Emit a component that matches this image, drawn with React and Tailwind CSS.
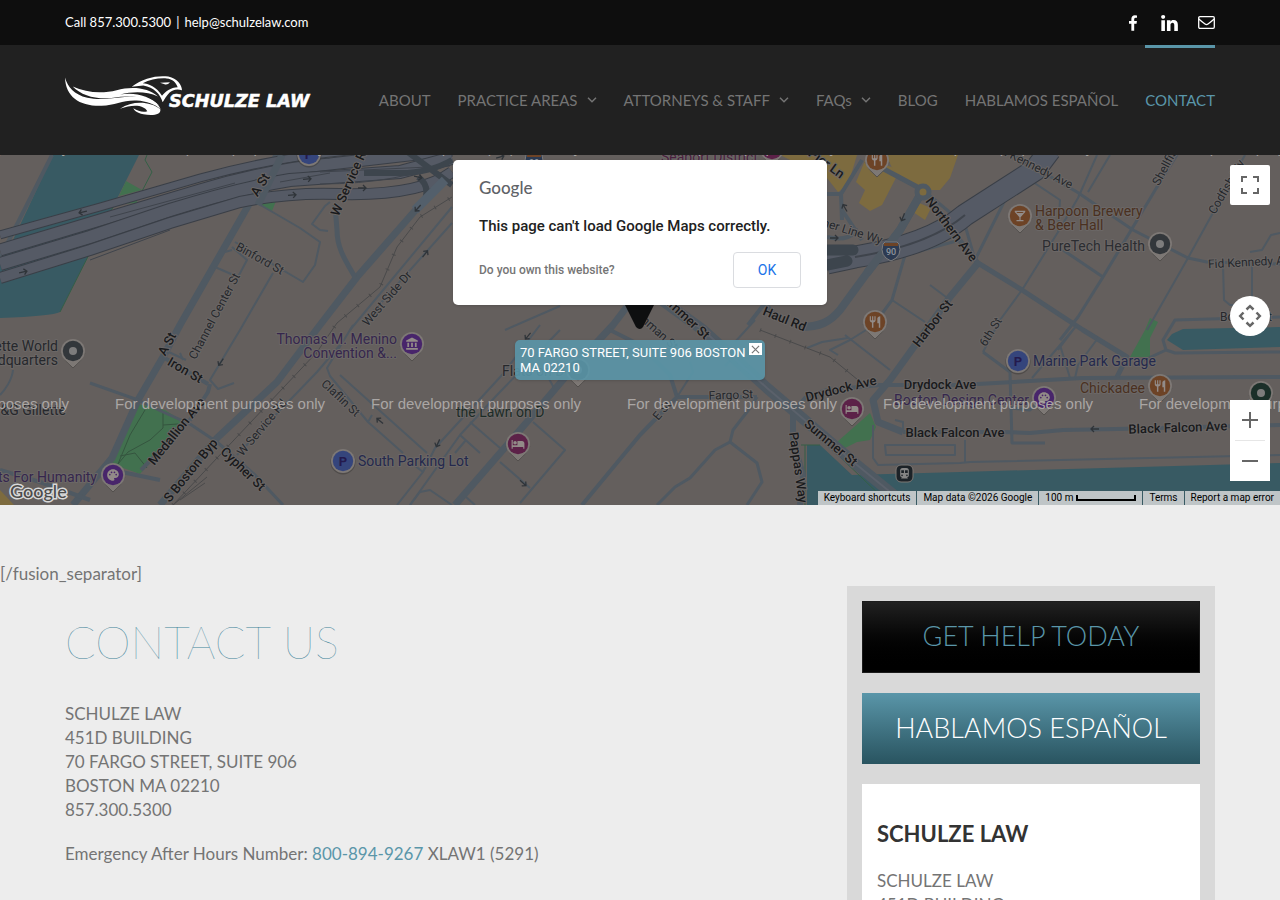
import React from "react";
import { MdRestaurant, MdHotel, MdLocalBar, MdPalette, MdAccountBalance, MdDirectionsTransit } from "react-icons/md";

const NAV = [
  { label: "ABOUT" },
  { label: "PRACTICE AREAS", menu: true },
  { label: "ATTORNEYS & STAFF", menu: true },
  { label: "FAQs", menu: true },
  { label: "BLOG" },
  { label: "HABLAMOS ESPAÑOL" },
  { label: "CONTACT", active: true },
];

// Local streets: [stroke width, path]
const STREETS = [
  [7, "M280 150 L180 325 L163 357 L138 400 L112 458 L73 505"],
  [2, "M235 242 L303 282 L315 265 L320 242 L300 228 L257 203"],
  [2, "M273 273 L240 330 L210 380 L218 389 L234 383"],
  [2, "M215 267 L238 277 L247 260 L232 247 M225 252 L232 250"],
  [2, "M330 202 L325 206 L312 224 L320 230 L328 231"],
  [3, "M90 383 L138 400 L163 412 L190 424 L217 442 M217 442 L255 475 L283 505"],
  [4, "M210 384 L208 392 L190 420 M141 470 L190 420 M163 357 L208 384"],
  [2, "M160 348 L186 360 M180 353 L183 360 M237 455 L317 372 L340 345"],
  [7, "M160 505 L217 438 L277 382 L320 325 L357 277 L413 213 L445 178"],
  [5, "M355 277 C345 260 337 248 337 230 L335 205"],
  [2, "M350 330 L452 207 M363 323 L452 223"],
  [2, "M353 325 L327 368 L330 376 L368 422 L403 453 M340 375 L427 453 M368 422 L372 415"],
  [2, "M540 325 L502 375 L435 448 L423 472 L397 505 M423 472 L410 462"],
  [2, "M560 330 L497 395 L460 435 L410 505 M460 435 L480 453 M455 453 L466 440 M470 422 L500 448"],
  [2, "M410 505 L420 492 L430 490 L452 505 M466 497 L475 505 M505 330 L560 306"],
  [7, "M455 505 L533 415 L573 368 L613 325 L632 300"],
  [2, "M533 422 L565 450 L520 503 M500 462 L530 488 M536 355 L554 388"],
  [4, "M582 505 L640 435 L677 397 L757 397 M677 397 L670 375 L640 345 L610 330"],
  [2, "M677 397 L693 372 L690 362 M740 350 L725 366 M735 342 L755 320"],
  [3, "M757 397 L750 408 L733 430 L730 442 L715 450 L690 478 L675 487 L657 505 M730 442 L757 463 L762 482 L747 505"],
  [11, "M655 295 L703 330 L767 388 L807 422 L857 465 L900 500"],
  [6, "M793 412 L793 440 L803 475 L800 505"],
  [4, "M793 412 L805 398 L827 390 L880 385 L960 385 L1083 378 L1280 377"],
  [7, "M978 263 L950 297 L890 380 L873 400 L878 422 L903 432"],
  [4, "M903 432 L1003 432 L1030 433 L1063 430 L1117 429 L1280 425"],
  [2, "M873 425 L873 458 L878 465 L960 463 L970 462 L1280 455"],
  [2, "M885 445 L955 445 L955 455 L886 455 Z M965 440 L965 463 M895 420 L903 422 L903 432"],
  [3, "M983 352 L1010 372 L1012 443 L1045 443 M1012 408 L1030 410 L1038 402"],
  [2, "M983 352 L1000 320 L1022 290 L1058 232 L1060 200 L1030 180 M1058 232 L1078 198 L1097 155 M1088 192 L1110 155"],
  [5, "M880 167 L923 190 L950 228 L978 263 L1022 290 L1083 330 L1127 357 L1117 377"],
  [8, "M923 190 L900 230 L867 273 L840 310 C830 322 820 327 800 327"],
  [3, "M923 190 L965 225 L975 260 L1018 174 M960 240 L905 255 L892 300 L870 330"],
  [2, "M892 300 L925 322 M930 285 L950 300 M874 325 L850 340 L830 350 L838 355"],
  [3, "M1177 155 L1157 187 L1103 277 L1078 317 L1060 340 M1063 250 L1103 277"],
  [2, "M1245 155 L1188 258 L1147 330"],
  [3, "M1013 155 L1077 192 L1133 230 L1188 258 L1207 262 L1280 264"],
  [2, "M1223 265 L1224 300 L1230 305 L1252 305 L1252 265 M1250 252 L1262 250 L1271 235 L1280 233"],
  [3, "M1280 317 L1175 320 L1163 340 L1166 350 L1175 353 L1280 352 M1166 350 L1140 362"],
  [2, "M1077 325 L1032 378 M1098 338 L1078 365 L1075 378 M1060 345 L1070 378 M1058 350 L1077 325"],
  [4, "M827 194 L841 194 L862 160 M841 194 L842 220 M780 320 L762 300 M748 325 L765 303"],
  [4, "M0 470 L40 482 L90 500 M112 470 L160 480 M827 237 C845 241 855 236 856 228 M842 210 L862 240"],
  [2, "M13 370 C12 380 5 390 0 395 M807 348 L822 342 L848 338 M845 335 L890 370"],
];

// Street names along their street: [text, x, y, angle]
const MAJOR_LABELS = [
  ["A St", 264, 187, -58],
  ["A St", 171, 346, -62],
  ["Iron St", 183, 374, 30],
  ["Medallion Ave", 180, 434, -51],
  ["S Boston Byp", 194, 473, -51],
  ["Cypher St", 240, 472, 44],
  ["W Service Rd", 354, 182, -66],
  ["Summer St", 681, 318, 43],
  ["Haul Rd", 783, 323, 22],
  ["Pier Ln", 824, 167, 36],
  ["Northern Ave", 948, 232, 53],
  ["Harbor St", 936, 326, -52],
  ["Drydock Ave", 842, 393, -14],
  ["Drydock Ave", 940, 389, 0],
  ["Black Falcon Ave", 955, 437, 0],
  ["Black Falcon Ave", 1178, 432, -2],
  ["Summer St", 828, 446, 40],
  ["Pappas Way", 794, 468, 82],
];

const MINOR_LABELS = [
  ["Binford St", 258, 262, 29],
  ["Channel Center St", 218, 318, -62],
  ["W Service Rd", 265, 430, -50],
  ["West Side Dr", 390, 301, -49],
  ["Claflin St", 338, 401, 43],
  ["Inman St", 656, 335, 42],
  ["E St", 665, 413, -50],
  ["Fargo St", 731, 399, -2],
  ["Steamer Line Wy", 838, 231, 17],
  ["6th St", 994, 334, -58],
  ["Fid Kennedy Ave", 1031, 169, 27],
  ["Fid Kennedy Ave", 1252, 266, -3],
  ["Shellfish St", 1173, 160, -62],
  ["Codfish Wy", 1230, 189, -60],
  ["Bolster St", 1246, 321, 0],
];

// Place names: [text, x, baseline, anchor, colour]
const PLACES = [
  ["Gillette World", 58, 351, "end", "#26282c"],
  ["Headquarters", 58, 365, "end", "#26282c"],
  ["P&G Gillette", 66, 415, "end", "#26282c"],
  ["Arts For Humanity", 97, 482, "end", "#35264d"],
  ["Thomas M. Menino", 397, 344, "end", "#35264d"],
  ["Convention &...", 397, 358, "end", "#35264d"],
  ["South Parking Lot", 358, 466, "start", "#24294d"],
  ["Flats on D", 502, 376, "start", "#26282c"],
  ["the Lawn on D", 456, 417, "start", "#1d2c26"],
  ["Seaport District", 661, 162, "start", "#4a1f3f"],
  ["Harpoon Brewery", 1035, 216, "start", "#4a3020"],
  ["& Beer Hall", 1035, 230, "start", "#4a3020"],
  ["PureTech Health", 1145, 251, "end", "#2b2d31"],
  ["Marine Park Garage", 1033, 366, "start", "#24294d"],
  ["Chickadee", 1145, 393, "end", "#4a3020"],
  ["Boston Design Center", 894, 405, "start", "#35264d"],
];

const PINS = [
  [73, 351, "#33373b", "dot"],
  [113, 475, "#48256b", MdPalette],
  [412, 344, "#48256b", MdAccountBalance],
  [343, 461, "#35457c", "P"],
  [309, 154, "#35457c", "P"],
  [518, 444, "#5c2148", MdHotel],
  [578, 370, "#33373b", "dot"],
  [772, 149, "#5c2148", MdHotel],
  [877, 160, "#6d4326", MdRestaurant],
  [875, 322, "#6d4326", MdRestaurant],
  [852, 409, "#5c2148", MdHotel],
  [1020, 216, "#6d4326", MdLocalBar],
  [1160, 244, "#33373b", "dot"],
  [1018, 361, "#35457c", "P"],
  [1044, 398, "#48256b", MdPalette],
  [1160, 386, "#6d4326", MdRestaurant],
  [1261, 393, "#1b2f29", "dot"],
];

const ARROWS = [
  [83, 212, 168], [23, 272, -12], [307, 179, -4], [292, 195, -4], [418, 177, 12], [362, 188, 0],
  [418, 208, 132], [425, 254, -52], [221, 362, 125], [380, 421, 220], [438, 443, 115], [528, 336, 130],
  [523, 483, 42], [845, 208, 240], [903, 217, 112], [834, 238, 0], [1095, 429, 180], [500, 157, -15],
];

function Pin({ x, y, color, kind }) {
  const Icon = kind;
  return (
    <g>
      {kind === "P" ? (
        <circle cx={x} cy={y + 1} r="12.5" fill="#3a3836" opacity=".5" />
      ) : (
        <path d={`M${x - 12} ${y + 2} Q${x - 9} ${y + 10} ${x} ${y + 17} Q${x + 9} ${y + 10} ${x + 12} ${y + 2}Z`} fill="#7d7875" stroke="#4a4745" strokeWidth=".8" />
      )}
      <circle cx={x} cy={y} r="12" fill="#7d7875" />
      <circle cx={x} cy={y} r="10.2" fill={color} />
      {kind === "dot" && <circle cx={x} cy={y} r="4" fill="#7d7c7c" />}
      {kind === "P" && (
        <text x={x} y={y + 5} textAnchor="middle" fontSize="13" fontWeight="700" fill="#241a4d">P</text>
      )}
      {typeof kind !== "string" && <Icon x={x - 7} y={y - 7} size={14} color="#928b88" />}
    </g>
  );
}

function Shield({ x, y }) {
  return (
    <g>
      <path d={`M${x - 8} ${y - 7} L${x - 6} ${y - 9} H${x + 6} L${x + 8} ${y - 7} Q${x + 12} ${y + 5} ${x} ${y + 10} Q${x - 12} ${y + 5} ${x - 8} ${y - 7}Z`} fill="#2c3a52" stroke="#7d7c7c" />
      <path d={`M${x - 7} ${y - 8} H${x + 7} V${y - 5} H${x - 7}Z`} fill="#6d4326" />
      <text x={x} y={y + 4} textAnchor="middle" fontSize="9" fontWeight="500" fill="#90959c">90</text>
    </g>
  );
}

function CityMap() {
  const lanes = [
    [7, "M0 235 L100 207 L200 178 Q270 159 330 153 L452 140"],
    [11, "M0 250 L60 232 L130 211 L200 190 Q270 169 330 164 L452 150"],
    [12, "M0 264 L90 237 L170 210 Q240 188 290 180 L400 172 L452 158"],
    [10, "M0 278 L90 250 L170 223 L240 202 Q290 192 340 194 Q420 196 452 172"],
  ];
  return (
    <svg viewBox="0 155 1280 350" preserveAspectRatio="xMidYMid slice" className="block h-full w-full" fontFamily="Roboto, sans-serif" aria-label="Map of Boston around 70 Fargo Street" role="img">
      <rect x="0" y="155" width="1280" height="350" fill="#645f5d" />
      <path d="M53 155 H139 L60 312 Q52 316 0 318 V262 L13 240Z" fill="#385a63" />
      <path d="M807 445 H820 L852 475 L960 472 L1280 463 V505 H807Z" fill="#385a63" />
      <path d="M1167 340 L1172 334 L1183 329 L1280 327 V347 L1183 350Z" fill="#385a63" />
      <g fill="#42714f">
        <path d="M126 181 L142 190 L119 196Z M119 204 L137 198 V203Z M258 203 L276 201 L272 211Z" />
        <path d="M138 404 L165 410 L184 422 L140 474 L112 464Z" />
        <path d="M837 442 L870 413 L876 427 L870 440 L857 442 L845 448Z" />
        <path d="M1150 318 L1158 322 L1150 338 V357 H1130 L1145 330Z" />
      </g>
      <g fill="#7d6b3f">
        <path d="M780 155 H857 L848 185 L838 192 L827 178Z M866 158 L900 170 L882 205 L870 211 L859 203 L865 190 L856 182Z" />
        <path d="M886 155 H958 L950 178 L940 190 H920 L893 170Z M912 200 L931 208 L925 220 L913 212Z M0 490 L14 505 H0Z" />
      </g>
      <path d="M147 155 L145 160 L152 172 L140 195 L113 207 L60 312 M793 412 L885 500 M801 445 H820 M805 445 V505" stroke="#345f46" fill="none" />
      <path d="M145 410 L130 435 L118 464 M163 412 V428 L150 440 L128 452 L118 464 M163 425 L178 424 M120 456 L135 453 L147 468" stroke="#35553f" fill="none" />

      <g fill="none" strokeLinejoin="round">
        {STREETS.map(([w, d]) => (
          <path key={d} d={d} stroke="#4f5962" strokeWidth={w} />
        ))}
        <path d="M657 295 L703 330 L767 388 L807 422 L857 465 L900 500" stroke="#5b616b" strokeWidth="2" />
        <path d="M52 155 L0 258" stroke="#4f5962" strokeWidth="4" />
        {lanes.map(([w, d]) => (
          <g key={d}>
            <path d={d} stroke="#3a3f47" strokeWidth={w + 2} />
            <path d={d} stroke="#555a65" strokeWidth={w} />
          </g>
        ))}
        <path d="M110 217 L235 183 M90 260 L170 230 M280 182 L330 173 M320 172 L450 166 M320 184 Q400 184 452 160" stroke="#3f444c" />
        <path d="M364 173 H400 Q430 173 452 160 M418 177 Q430 185 425 200 M405 150 L452 185" stroke="#3d454d" strokeWidth="6" />
        <path d="M445 180 L415 210" stroke="#535f6b" strokeWidth="9" />
        <path d="M258 205 L282 155" stroke="#4f5962" strokeWidth="7" />
        <path d="M827 263 L855 257 Q930 245 965 215 L1035 170 L1050 150" stroke="#3a3f47" strokeWidth="23" />
        <path d="M827 263 L855 257 Q930 245 965 215 L1035 170 L1050 150" stroke="#555a65" strokeWidth="21" />
        <path d="M855 257 Q930 245 965 215" stroke="#3f444c" strokeWidth="2" />
        <path d="M827 250 H853 M827 265 L847 261" stroke="#3d454d" strokeWidth="11" strokeLinecap="round" />
        <path d="M923 190 L900 230 L867 273" stroke="#4f5962" strokeWidth="8" />
        <circle cx="923" cy="192" r="6" stroke="#4f5962" strokeWidth="5" fill="#7d6b3f" />
        <path d="M173 505 L217 458 L317 352 L337 323 L380 287 L397 247 L420 217 L452 197 M173 505 L207 477 M180 500 L205 483 M760 330 L830 357 L858 380" stroke="#4a4a4b" />
        <path d="M173 505 L217 458 L317 352 L337 323 L380 287 L397 247 L420 217 L452 197 M760 330 L830 357 L858 380" stroke="#4a4a4b" strokeWidth="4" strokeDasharray="1 15" />
      </g>

      <g stroke="#2f3439" fill="none" strokeWidth="1.3">
        {ARROWS.map(([x, y, a]) => (
          <path key={`${x}-${y}`} d="M-4 0 H4 M1 -3 L4 0 L1 3" transform={`translate(${x} ${y}) rotate(${a})`} />
        ))}
      </g>

      {PINS.map(([x, y, c, k]) => (
        <Pin key={`${x}-${y}`} x={x} y={y} color={c} kind={k} />
      ))}
      <rect x="896" y="465" width="17" height="17" rx="5" fill="#1c2227" stroke="#7d7875" />
      <MdDirectionsTransit x={898} y={467} size={13} color="#858585" />
      <Shield x={891} y={251} />
      <Shield x={534} y={162} />

      <g stroke="#6b6766" strokeWidth="2" paintOrder="stroke" strokeLinejoin="round">
        {MAJOR_LABELS.map(([t, x, y, a]) => (
          <text key={`${x}-${y}`} transform={`translate(${x} ${y}) rotate(${a})`} textAnchor="middle" fontSize="13" fontWeight="500" fill="#191a1c">{t}</text>
        ))}
        {MINOR_LABELS.map(([t, x, y, a]) => (
          <text key={`${x}-${y}`} transform={`translate(${x} ${y}) rotate(${a})`} textAnchor="middle" fontSize="12" fill="#25282c">{t}</text>
        ))}
        {PLACES.map(([t, x, y, anchor, c]) => (
          <text key={t} x={x} y={y} textAnchor={anchor} fontSize="14" fill={c}>{t}</text>
        ))}
      </g>
      <path d="M624 303 H655 L643 327 Q640 331 636 327Z" fill="#0e0f10" />

      <g fill="#aaa6a4" fontSize="15" fontFamily="'Liberation Sans', Arial, sans-serif">
        {[-141, 115, 371, 627, 883, 1139].map((x) => (
          <g key={x}>
            <text x={x} y="153">For development purposes only</text>
            <text x={x} y="409">For development purposes only</text>
          </g>
        ))}
      </g>
      <text x="10" y="498" fontSize="18" fontWeight="500" fontFamily="Lato, sans-serif" fill="#4b4b4b" stroke="#d8d8d8" strokeWidth="3" paintOrder="stroke">Google</text>
    </svg>
  );
}

function Logo() {
  return (
    <svg viewBox="195 226 756 122" className="h-[41px] w-[252px]" role="img" aria-label="Schulze Law">
      <g fill="#fff">
        <path d="M195 233 C197 292 240 320 305 318 C345 316 370 300 410 302 C440 304 465 313 482 328 C472 300 432 288 390 290 C345 293 305 303 262 294 C222 284 203 262 195 233Z" />
        <path d="M218 260 C260 280 310 281 350 271 C395 259 445 263 474 290 C440 274 400 274 360 284 C400 276 450 286 478 318 C440 290 390 286 340 294 C290 300 245 288 218 260Z" />
        <path d="M360 327 C400 300 452 306 481 328 C484 346 455 348 430 343 C410 339 402 331 400 325 C415 334 428 338 442 334 C432 316 400 312 360 327Z" />
        <path fillRule="evenodd" d="M395 261 C430 234 470 226 505 230 C532 236 545 254 546 271 C530 266 517 270 508 279 C500 288 494 297 488 307 C482 285 462 262 430 257 Z M428 250 C445 251 470 260 486 288 C496 274 512 263 533 262 C528 248 518 238 500 236 C475 234 450 240 428 250Z" />
        <path d="M480 249 L510 247 Q504 255 496 254Z" />
        <text x="507" y="321" fontFamily="'DejaVu Sans', sans-serif" fontWeight="700" fontStyle="italic" fontSize="53" stroke="#fff" strokeWidth="1.5">SCHULZE LAW</text>
      </g>
    </svg>
  );
}

function Chevron() {
  return (
    <svg viewBox="0 0 10 6" className="ml-[9px] h-[6px] w-[10px]" fill="none" stroke="currentColor" strokeWidth="1.5" aria-hidden="true">
      <path d="M1 .8 L5 4.8 L9 .8" />
    </svg>
  );
}

function FacebookIcon() {
  return (
    <svg viewBox="95 0 864 1664" className="h-[16px] w-[8px]" fill="currentColor" aria-hidden="true">
      <path d="M959 12v264H802q-86 0-116 36t-30 108v189h293l-39 296H656v759H350V905H95V609h255V391q0-186 104-288.500T731 0q147 0 228 12z" />
    </svg>
  );
}

function LinkedInIcon() {
  return (
    <svg viewBox="0 148 1536 1468" className="h-[16px] w-[17px]" fill="currentColor" aria-hidden="true">
      <path d="M349 625v991H19V625h330zm21-306q1 73-50.500 122T184 490h-2q-82 0-132-49T0 319q0-74 51.500-122.500T186 148t133 48.500T370 319zm1166 729v568h-329v-530q0-105-40.500-164.500T1040 862q-63 0-105.500 34.500T871 982q-11 30-11 81v553H531q2-399 2-647t-1-296l-1-48h329v144h-2q20-32 41-56t56.500-52 87-43.500T1157 602q171 0 275 113.500t104 332.500z" />
    </svg>
  );
}

function EnvelopeIcon() {
  return (
    <svg viewBox="0 0 17 13" className="h-[13px] w-[17px]" fill="none" stroke="currentColor" strokeWidth="1.3" aria-hidden="true">
      <rect x=".7" y=".7" width="15.6" height="11.6" rx="1.2" />
      <path d="M.8 3 C3 5 5 6.500 7 8 Q8.500 9.200 10 8 C12 6.500 14 5 16.200 3" />
    </svg>
  );
}

function Header() {
  return (
    <header>
      <div className="bg-[#0e0e0e] text-white">
        <div className="mx-auto flex h-[45px] max-w-[1150px] items-center justify-between">
          <p className="flex gap-[5px] pb-[2px] text-[13px] leading-[20px]">
            <span>Call 857.300.5300</span>
            <span>|</span>
            <a href="mailto:help@schulzelaw.com">help@schulzelaw.com</a>
          </p>
          <div className="flex items-center gap-[20px]">
            <a href="#facebook" aria-label="Facebook" className="pr-1"><FacebookIcon /></a>
            <a href="#linkedin" aria-label="LinkedIn"><LinkedInIcon /></a>
            <a href="#email" aria-label="Email"><EnvelopeIcon /></a>
          </div>
        </div>
      </div>
      <div className="bg-[#212121]">
        <div className="mx-auto flex h-[110px] max-w-[1150px] justify-between">
          <a href="#home" className="mt-[30px] shrink-0 self-start"><Logo /></a>
          <nav className="flex gap-[27px] text-[15px] text-[#747474]">
            {NAV.map((n) => (
              <a
                key={n.label}
                href="#nav"
                className={n.active ? "flex items-center border-t-3 border-[#5a96a9] pb-[3px] whitespace-nowrap text-[#5a96a9]" : "flex items-center border-t-3 border-transparent pb-[3px] whitespace-nowrap"}
              >
                {n.label}
                {n.menu && <Chevron />}
              </a>
            ))}
          </nav>
        </div>
      </div>
    </header>
  );
}

function MapSection() {
  return (
    <section className="relative h-[350px] overflow-hidden font-[Roboto,sans-serif]">
      <CityMap />

      <div className="absolute top-[185px] left-1/2 flex w-[250px] -translate-x-1/2 items-start justify-between rounded-[5px] bg-[#5a96a9]/90 p-[5px] text-[13px] leading-[15px] text-white shadow">
        <p>70 FARGO STREET, SUITE 906 BOSTON MA 02210</p>
        <button type="button" aria-label="Close" className="-mt-[2px] -mr-[2px] flex h-[12px] w-[13px] shrink-0 items-center justify-center bg-white text-[#777]">
          <svg viewBox="0 0 10 10" className="h-[9px] w-[9px]" stroke="currentColor" strokeWidth="1.3"><path d="M1 1 L9 9 M9 1 L1 9" /></svg>
        </button>
      </div>

      <div role="dialog" aria-label="Google Maps" className="absolute top-[5px] left-1/2 h-[145px] w-[374px] -translate-x-1/2 rounded-[5px] bg-white px-[26px] pt-[15px] shadow">
        <div className="font-[Lato,sans-serif] text-[17px] leading-[26px] font-medium text-[#5f6368]">Google</div>
        <p className="mt-[16px] text-[15px] leading-[18px] font-medium text-[#212121]">This page can't load Google Maps correctly.</p>
        <div className="mt-[17px] flex items-center justify-between">
          <a href="#owner" className="text-[12px] font-medium text-[#757575]">Do you own this website?</a>
          <button type="button" className="h-[36px] w-[68px] rounded-[4px] border border-[#dadce0] text-[14px] text-[#1a73e8]">OK</button>
        </div>
      </div>

      <button type="button" aria-label="Toggle fullscreen" className="absolute top-[10px] right-[10px] flex h-[40px] w-[40px] items-center justify-center rounded-[2px] bg-white">
        <svg viewBox="0 0 18 18" className="h-[18px] w-[18px]" fill="#666"><path d="M0 0v6h2V2h4V0H0zm16 0h-4v2h4v4h2V0h-2zm0 16h-4v2h6v-6h-2v4zM2 12H0v6h6v-2H2v-4z" /></svg>
      </button>
      <button type="button" aria-label="Map camera controls" className="absolute top-[141px] right-[10px] flex h-[40px] w-[40px] items-center justify-center rounded-full bg-white">
        <svg viewBox="0 0 24 24" className="h-[24px] w-[24px]" fill="none" stroke="#666" strokeWidth="2.500"><path d="M8.500 5.500 L12 2.200 L15.500 5.500 M8.500 18.500 L12 21.800 L15.500 18.500 M5.500 8.500 L2.200 12 L5.500 15.500 M18.500 8.500 L21.800 12 L18.500 15.500" /></svg>
      </button>
      <div className="absolute top-[245px] right-[10px] flex w-[40px] flex-col items-center bg-white">
        <button type="button" aria-label="Zoom in" className="flex h-[40px] w-full items-center justify-center">
          <svg viewBox="0 0 16 16" className="h-[16px] w-[16px]" fill="#666"><path d="M7 0h2v7h7v2H9v7H7V9H0V7h7z" /></svg>
        </button>
        <div className="h-px w-[30px] bg-[#e6e6e6]" />
        <button type="button" aria-label="Zoom out" className="flex h-[40px] w-full items-center justify-center">
          <svg viewBox="0 0 16 16" className="h-[16px] w-[16px]" fill="#666"><path d="M0 7h16v2H0z" /></svg>
        </button>
      </div>

      <div className="absolute right-0 bottom-0 flex gap-px text-[10px] leading-[14px] text-black">
        <button type="button" className="bg-[#bfc5c7] px-[6px]">Keyboard shortcuts</button>
        <span className="bg-[#bfc5c7] px-[6px]">Map data ©2026 Google</span>
        <span className="flex bg-[#bfc5c7] px-[6px]">
          100 m
          <span className="mt-[4px] ml-[3px] h-[6px] w-[60px] border-x-2 border-b-2 border-black" />
        </span>
        <a href="#terms" className="bg-[#bfc5c7] px-[6px]">Terms</a>
        <a href="#report" className="bg-[#bfc5c7] px-[6px]">Report a map error</a>
      </div>
    </section>
  );
}

function Address() {
  return (
    <p>
      SCHULZE LAW<br />
      451D BUILDING<br />
      70 FARGO STREET, SUITE 906<br />
      BOSTON MA 02210<br />
      857.300.5300
    </p>
  );
}

export default function App() {
  return (
    <div className="h-screen overflow-hidden bg-[#ededed] font-[Lato,sans-serif] text-[#747474]">
      <Header />
      <MapSection />
      <main className="pt-[57px] text-[17px] leading-[24px]">
        <p>[/fusion_separator]</p>
        <div className="mx-auto flex max-w-[1150px] items-start justify-between">
          <section className="pt-[28px]">
            <h1 className="text-[45px] leading-[56px] font-thin text-[#3f8499]">CONTACT US</h1>
            <div className="mt-[32px]"><Address /></div>
            <p className="mt-[20px]">
              Emergency After Hours Number: <a href="tel:8008949267" className="text-[#5a96a9]">800-894-9267</a> XLAW1 (5291)
            </p>
          </section>
          <aside className="w-[368px] bg-[#d9d9d9] p-[15px]">
            <a href="#help" className="flex h-[72px] items-center justify-center border border-[#1c1c1c] bg-linear-to-b from-[#212121] to-black pb-[2px] text-[27px] font-light text-[#5a96a9]">GET HELP TODAY</a>
            <a href="#espanol" className="mt-[20px] flex h-[71px] items-center justify-center bg-linear-to-b from-[#5a96a9] to-[#295460] pb-[2px] text-[27px] font-light text-white">HABLAMOS ESPAÑOL</a>
            <div className="mt-[20px] bg-white px-[15px] pt-[35px] pb-[30px]">
              <h2 className="mb-[20px] text-[22px] leading-[30px] font-bold text-[#333]">SCHULZE LAW</h2>
              <Address />
            </div>
          </aside>
        </div>
      </main>
    </div>
  );
}
